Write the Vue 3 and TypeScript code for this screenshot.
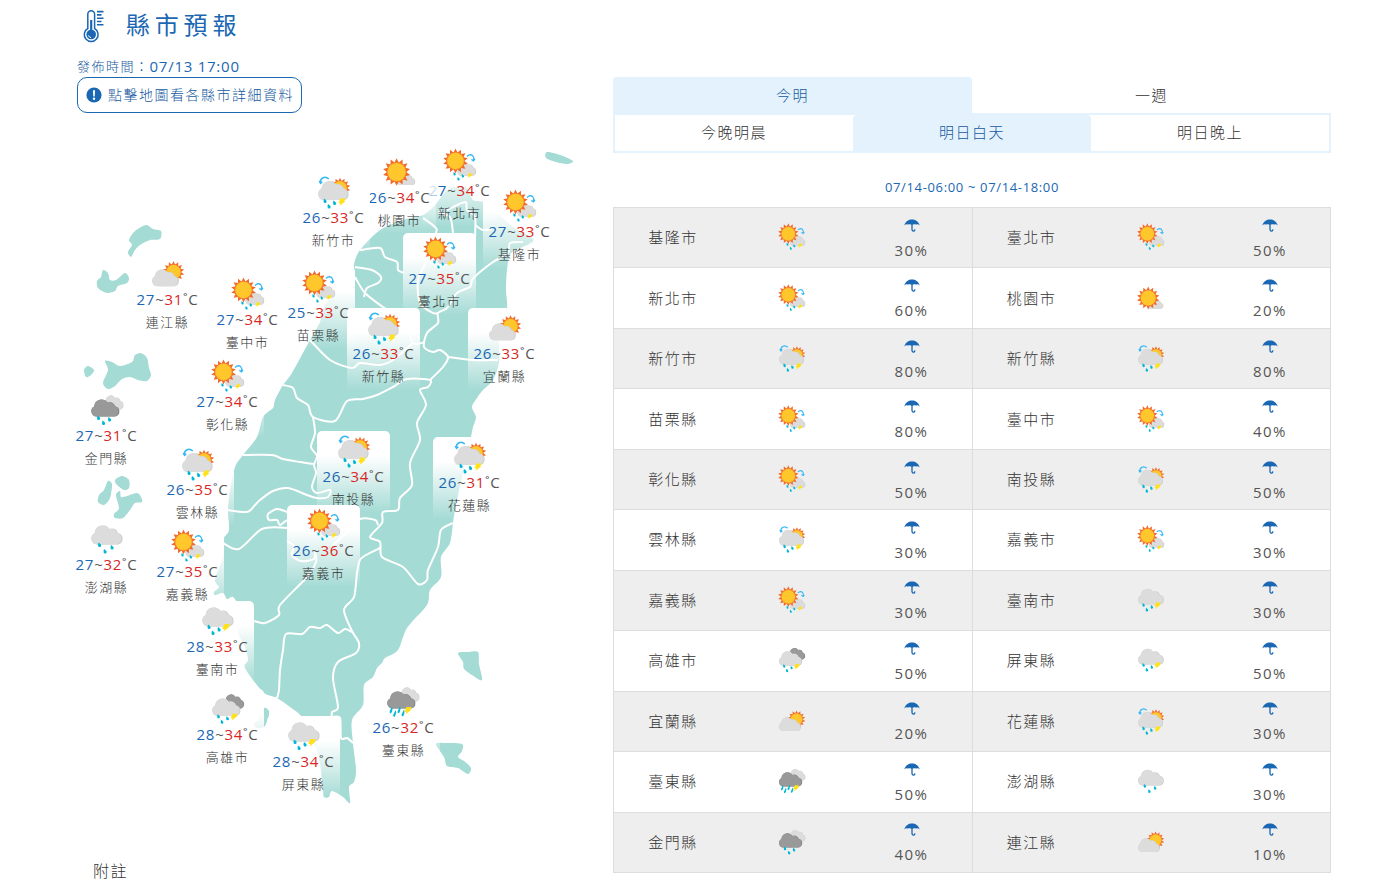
<script setup lang="ts">
import { ref } from 'vue'

type Point = [number, number]
type Kind =
  | 'sun-shower'
  | 'sun-cloud'
  | 'cloud-sun-shower'
  | 'cloud-sun'
  | 'rain'
  | 'thunder'
  | 'overcast-thunder'
  | 'dark-thunder'
  | 'dark-rain'

interface County {
  name: string
  low: number
  high: number
  pop: number
  kind: Kind
  x: number
  y: number
}

const ORIGIN_X = 77
const ORIGIN_Y = 137
const MAP_W = 500
const MAP_H = 690

const counties: County[] = [
  { name: '基隆市', low: 27, high: 33, pop: 30, kind: 'sun-shower', x: 519, y: 186 },
  { name: '臺北市', low: 27, high: 35, pop: 50, kind: 'sun-shower', x: 439, y: 233 },
  { name: '新北市', low: 27, high: 34, pop: 60, kind: 'sun-shower', x: 459, y: 145 },
  { name: '桃園市', low: 26, high: 34, pop: 20, kind: 'sun-cloud', x: 399, y: 152 },
  { name: '新竹市', low: 26, high: 33, pop: 80, kind: 'cloud-sun-shower', x: 333, y: 172 },
  { name: '新竹縣', low: 26, high: 33, pop: 80, kind: 'cloud-sun-shower', x: 383, y: 308 },
  { name: '苗栗縣', low: 25, high: 33, pop: 80, kind: 'sun-shower', x: 318, y: 267 },
  { name: '臺中市', low: 27, high: 34, pop: 40, kind: 'sun-shower', x: 247, y: 274 },
  { name: '彰化縣', low: 27, high: 34, pop: 50, kind: 'sun-shower', x: 227, y: 356 },
  { name: '南投縣', low: 26, high: 34, pop: 50, kind: 'cloud-sun-shower', x: 353, y: 431 },
  { name: '雲林縣', low: 26, high: 35, pop: 30, kind: 'cloud-sun-shower', x: 197, y: 444 },
  { name: '嘉義市', low: 26, high: 36, pop: 30, kind: 'sun-shower', x: 323, y: 505 },
  { name: '嘉義縣', low: 27, high: 35, pop: 30, kind: 'sun-shower', x: 187, y: 526 },
  { name: '臺南市', low: 28, high: 33, pop: 30, kind: 'thunder', x: 217, y: 601 },
  { name: '高雄市', low: 28, high: 34, pop: 50, kind: 'overcast-thunder', x: 227, y: 689 },
  { name: '屏東縣', low: 28, high: 34, pop: 50, kind: 'thunder', x: 303, y: 716 },
  { name: '宜蘭縣', low: 26, high: 33, pop: 20, kind: 'cloud-sun', x: 504, y: 308 },
  { name: '花蓮縣', low: 26, high: 31, pop: 30, kind: 'cloud-sun-shower', x: 469, y: 437 },
  { name: '臺東縣', low: 26, high: 32, pop: 50, kind: 'dark-thunder', x: 403, y: 682 },
  { name: '澎湖縣', low: 27, high: 32, pop: 30, kind: 'rain', x: 106, y: 519 },
  { name: '金門縣', low: 27, high: 31, pop: 40, kind: 'dark-rain', x: 106, y: 390 },
  { name: '連江縣', low: 27, high: 31, pop: 10, kind: 'cloud-sun', x: 167, y: 254 },
]

const rows = Array.from({ length: counties.length / 2 }, (_, i) => counties.slice(i * 2, i * 2 + 2))

const ranges = ['今明', '一週']
const periods = ['今晚明晨', '明日白天', '明日晚上']
const range = ref(0)
const period = ref(1)
const selected = ref('')

function pinStyle(c: County) {
  return {
    left: `${((c.x - ORIGIN_X) / MAP_W) * 100}%`,
    top: `${((c.y - ORIGIN_Y) / MAP_H) * 100}%`,
  }
}

/* "x,y x,y …" to points */
function pts(s: string): Point[] {
  return s.trim().split(/\s+/).map((p) => p.split(',').map(Number) as Point)
}

/* Catmull-Rom spline through the points, written as cubic curves */
function curve(s: string, closed = false): string {
  const p = pts(s)
  const n = p.length
  const at = (i: number): Point => (closed ? p[(i + n) % n] : p[Math.max(0, Math.min(n - 1, i))])
  let d = `M${p[0][0]} ${p[0][1]}`
  const last = closed ? n : n - 1
  for (let i = 0; i < last; i++) {
    const [a, b, c, e] = [at(i - 1), at(i), at(i + 1), at(i + 2)]
    const k = 7
    d += ` C${b[0] + (c[0] - a[0]) / k} ${b[1] + (c[1] - a[1]) / k} ${c[0] - (e[0] - b[0]) / k} ${c[1] - (e[1] - b[1]) / k} ${c[0]} ${c[1]}`
  }
  return closed ? d + 'Z' : d
}

const lands = [
  '447,190 457,187 467,188 473,200 483,202 487,212 497,213 513,227 533,239 527,245 511,253 507,270 506,290 507,308 500,325 499,345 499,363 493,380 483,390 477,398 472,407 476,417 473,427 471,437 466,460 462,477 455,510 453,523 450,543 441,557 441,577 430,590 427,605 407,628 398,650 385,658 382,663 377,668 373,677 364,685 363,705 352,720 353,743 356,770 354,782 349,787 350,803 343,797 332,791 329,797 324,797 323,790 320,763 316,747 308,735 302,717 290,707 277,698 263,692 245,668 248,660 245,647 238,633 236,618 238,606 233,597 227,599 223,593 215,595 214,592 219,587 215,580 222,560 224,547 224,538 229,530 228,510 230,490 235,467 243,455 257,437 263,417 273,408 275,400 283,385 292,373 310,340 320,322 326,303 343,287 354,274 354,264 360,250 380,230 403,220 423,215 435,205',
  '547,152 560,155 573,161 567,164 556,162 546,158',
  '146,225 153,229 161,231 160,239 150,240 140,245 135,250 131,257 128,252 132,245 129,240 135,231',
  '103,270 108,273 110,280 116,280 125,273 129,278 127,283 118,286 115,291 107,293 98,288 97,281 101,277',
  '88,366 94,370 91,375 86,377 84,370',
  '105,361 112,362 120,366 132,362 135,355 141,353 147,358 149,368 151,375 147,381 138,380 130,377 122,379 115,386 108,389 103,383 108,370',
  '108,481 112,484 111,494 109,500 104,505 98,502 99,495 104,490',
  '122,476 129,480 129,488 124,490 117,485 115,480',
  '120,491 121,497 127,496 137,493 141,497 142,502 135,503 130,510 123,518 115,518 114,514 119,508 116,495',
  '264,708 269,711 268,719 264,727 257,728 254,724 259,718',
  '458,653 468,652 478,652 479,664 482,680 472,675 464,669 463,662',
  '436,744 446,743 462,744 462,751 458,757 464,761 471,768 468,774 458,768 447,766 444,757',
].map((s) => curve(s, true))

const borders = [
  '360,250 380,248 385,257 397,262 398,270 404,273',
  '355,267 372,270 381,277 378,283 367,288 364,297',
  '355,277 365,293 383,307 405,322 413,343 425,342',
  '423,218 435,227 436,233 426,262 418,280 420,303 433,313 438,313',
  '438,212 450,217 453,233',
  '447,210 465,202 467,210 475,217 475,237',
  '475,225 483,230 492,229',
  '523,242 510,243 508,253 493,262 480,272 472,280 470,287 457,293 447,308 438,313 438,323 427,333 424,347 433,352 440,350 448,357 443,367 430,380',
  '448,357 473,360 498,360',
  '310,340 330,360 352,368 360,363 380,365 393,360 413,343',
  '283,385 293,388 297,398 308,405 313,417 335,421 347,401 363,399 377,395 393,387 407,379 430,380 428,387 420,390 426,405 417,423 420,440 410,463 412,485 400,498 398,510 383,512 382,523 370,537 380,542 382,557 403,567 418,584 427,580 428,570 438,547 441,530 453,523',
  '313,417 315,433 311,447 317,456 314,465 316,473 312,487 317,493 330,490 328,497 317,498 307,495 288,488 273,491 260,500 255,505 247,512 227,510',
  '243,455 272,455 283,459 300,462 314,464',
  '223,543 239,549 262,529 287,528 298,533',
  '298,518 287,512 277,509 268,514 269,520 277,520 280,525 287,520',
  '333,545 347,532 360,519 375,520 378,525',
  '380,548 368,554 360,560 357,573 354,597 344,610 352,631 359,643 356,653 338,662 333,678 338,707 332,712 332,719',
  '287,541 294,546 292,555 301,561 314,559 315,553 316,562 307,577 280,605 279,615 265,623 254,621',
  '352,632 345,629 338,633 327,625 320,628 310,627 302,634 286,634 283,650 280,670 279,690 277,698',
  '332,717 340,718 341,738 347,738 353,743',
].map((s) => curve(s))

function star(outer: number, inner: number, n = 15): string {
  const out: string[] = []
  for (let i = 0; i < n * 2; i++) {
    const r = i % 2 ? inner : outer
    const a = (Math.PI * i) / n - Math.PI / 2
    out.push(`${(r * Math.cos(a)).toFixed(2)},${(r * Math.sin(a)).toFixed(2)}`)
  }
  return out.join(' ')
}
const sunRays = star(12.6, 8.8, 14)
</script>

<template>
  <svg class="defs" aria-hidden="true">
    <defs>
      <g id="sun">
        <polygon :points="sunRays" fill="#f1692c" />
        <circle r="9" fill="#f58a2c" />
        <circle r="8.2" fill="#ffc72c" />
      </g>
      <path id="cloud-shape" d="M6.5 19.5A6 6 0 0 1 4 8.2A8.3 8.3 0 0 1 19 4A6 6 0 0 1 27.3 8A5.9 5.9 0 0 1 27.5 19.5Z" />
      <g id="cloud">
        <use href="#cloud-shape" fill="#cbcbcb" />
        <path fill="#dcdcdc" d="M6.5 19.5A6 6 0 0 1 4 8.2A8.3 8.3 0 0 1 19 4A6 6 0 0 1 26.5 8Q31 9 31 13.5Q31 18 26.5 19.5Z" />
      </g>
      <g id="cloud-dark">
        <use href="#cloud-shape" fill="#7f7f7f" />
        <path fill="#999" d="M6.5 19.5A6 6 0 0 1 4 8.2A8.3 8.3 0 0 1 19 4A6 6 0 0 1 26.5 8Q31 9 31 13.5Q31 18 26.5 19.5Z" />
      </g>
      <path id="drop" fill="#00b8d4" d="M-1 -2Q2 0 1.6 1.2A1.5 1.5 0 0 1 -1.4 1Q-1.6 0 -1 -2Z" />
      <path id="streak" fill="#00b8d4" d="M1 -3.5L1.6 -1Q1 2.6 -.2 3.4Q-1.8 3.4 -1.4 1.6Z" />
      <path id="bolt" fill="#ffe11a" d="M-1.6 -3.6H3.8L2.4 -1H3.8L-2.6 4.2L-1.4 1.4H-3.8Z" />
      <path id="turn" fill="none" stroke="#35b7f3" stroke-width="1.5" d="M-4 3.6C-4.4 -1.6 .6 -4 4.4 -.4M-5.2 1.6L-3.8 4L-2 2.4" />

      <symbol id="sun-shower" viewBox="0 0 34 34">
        <use href="#cloud" transform="translate(14 14) scale(.6 .7)" />
        <use href="#sun" transform="translate(12.5 13)" />
        <path fill="none" stroke="#35b7f3" stroke-width="1.3" d="M24 8.4Q27 5.6 29.6 7.6Q31.4 9.4 30.6 12.4M28.4 11.4L30.4 12.8L32 11" />
        <use href="#drop" transform="translate(11.5 25.5) scale(.8)" />
        <use href="#drop" transform="translate(15.5 30.5) scale(.8)" />
        <use href="#drop" transform="translate(19.8 27.5) scale(.8)" />
        <use href="#bolt" transform="translate(27 27.5) scale(.65)" />
      </symbol>
      <symbol id="sun-cloud" viewBox="0 0 34 34">
        <use href="#cloud" transform="translate(13 18) scale(.6 .62)" />
        <use href="#sun" transform="translate(13.6 17) scale(1.1)" />
      </symbol>
      <symbol id="cloud-sun-shower" viewBox="0 0 34 34">
        <use href="#sun" transform="translate(23 13) scale(.82)" />
        <use href="#cloud" transform="translate(.6 5.6) scale(.97 1)" />
        <use href="#turn" transform="translate(7.4 4.4)" />
        <use href="#drop" transform="translate(8 25.5)" />
        <use href="#drop" transform="translate(12 31)" />
        <use href="#drop" transform="translate(17.5 27.5)" />
        <use href="#bolt" transform="translate(25 27) scale(.95)" />
      </symbol>
      <symbol id="cloud-sun" viewBox="0 0 34 34">
        <use href="#sun" transform="translate(22.5 15) scale(.86)" />
        <use href="#cloud" transform="translate(.6 12) scale(.85 .88)" />
      </symbol>
      <symbol id="rain" viewBox="0 0 34 34">
        <use href="#cloud" transform="translate(.6 3)" />
        <use href="#drop" transform="translate(9.5 22.5)" />
        <use href="#drop" transform="translate(15 29)" />
        <use href="#drop" transform="translate(22 25)" />
      </symbol>
      <symbol id="thunder" viewBox="0 0 34 34">
        <use href="#cloud" transform="translate(.6 3)" />
        <use href="#drop" transform="translate(8 22.5)" />
        <use href="#drop" transform="translate(12 28.5)" />
        <use href="#drop" transform="translate(18 25)" />
        <use href="#bolt" transform="translate(25 23.5)" />
      </symbol>
      <symbol id="overcast-thunder" viewBox="0 0 34 34">
        <use href="#cloud-dark" transform="translate(12 2) scale(.66 .74)" />
        <use href="#cloud" transform="translate(.6 6) scale(.9 .92)" />
        <use href="#drop" transform="translate(7.5 24) scale(.9)" />
        <use href="#drop" transform="translate(11 29.5) scale(.9)" />
        <use href="#drop" transform="translate(16.5 26) scale(.9)" />
        <use href="#bolt" transform="translate(23 25) scale(.9)" />
      </symbol>
      <symbol id="dark-thunder" viewBox="0 0 34 34">
        <use href="#cloud" transform="translate(13 2) scale(.64 .74)" />
        <use href="#cloud-dark" transform="translate(.6 6) scale(.9)" />
        <use href="#streak" transform="translate(5 25)" />
        <use href="#streak" transform="translate(8.6 28.5)" />
        <use href="#streak" transform="translate(13 24.8)" />
        <use href="#streak" transform="translate(17 28)" />
        <use href="#bolt" transform="translate(22 25.5) scale(.95)" />
      </symbol>
      <symbol id="dark-rain" viewBox="0 0 34 34">
        <use href="#cloud" transform="translate(13 2) scale(.64 .74)" />
        <use href="#cloud-dark" transform="translate(.6 6) scale(.9)" />
        <use href="#drop" transform="translate(8.5 24.5)" />
        <use href="#drop" transform="translate(13.5 29.5)" />
        <use href="#drop" transform="translate(19.5 26)" />
      </symbol>
      <symbol id="umbrella" viewBox="0 0 16 13">
        <path fill="#1a67b3" d="M.3 6.4C1.5 2.4 4.6 .6 8 .6S14.5 2.4 15.7 6.4Q14 4.8 12.2 5.6Q11.4 5 10.2 5.3Q9 5.4 8 5.8Q7 5.4 5.8 5.3Q4.6 5 3.8 5.6Q2 4.8 .3 6.4Z" />
        <path fill="none" stroke="#1a67b3" stroke-width="1.3" d="M8 5V10.6Q8.2 12.2 9.6 12.1Q10.8 12 10.9 10.4" />
      </symbol>
    </defs>
  </svg>

  <main class="page">
    <header class="head">
      <h1 class="title">
        <svg class="thermo" viewBox="0 0 24 34" aria-hidden="true">
          <path fill="none" stroke="#1a67b3" stroke-width="1.5" d="M5.8 19.5V5.2A3.4 3.4 0 0 1 12.6 5.2V19.5A6.9 6.9 0 1 1 5.8 19.5Z" />
          <circle cx="9.2" cy="25.5" r="4.8" fill="#1a67b3" />
          <path fill="none" stroke="#1a67b3" stroke-width="2.2" d="M9.2 11V24" />
          <path fill="none" stroke="#fff" stroke-width="1" d="M6.4 26.4Q7.2 28.4 9 28.6" />
          <path fill="none" stroke="#1a67b3" stroke-width="1.6" d="M15 2.6H21.5M15 5.9H19.5M15 9.2H21.5M15 12.5H19.5M15 15.8H21.5" />
        </svg>
        <span>縣市預報</span>
      </h1>
      <p class="issued"><span>發佈時間：</span><time>07/13 17:00</time></p>
    </header>

    <div class="columns">
      <section class="left">
        <p class="hint">
          <svg class="hint-icon" viewBox="0 0 16 16" aria-hidden="true">
            <circle cx="8" cy="8" r="7.6" fill="#1a67b3" />
            <path fill="#fff" d="M6.9 3.2H9.1L8.7 9.4H7.3Z" />
            <circle cx="8" cy="11.8" r="1.2" fill="#fff" />
          </svg>
          <span>點擊地圖看各縣市詳細資料</span>
        </p>

        <div class="map">
          <svg class="land" :viewBox="`${ORIGIN_X} ${ORIGIN_Y} ${MAP_W} ${MAP_H}`" aria-hidden="true">
            <path v-for="(d, i) in lands" :key="`l${i}`" :d="d" fill="#a5dbd5" />
            <path v-for="(d, i) in borders" :key="`b${i}`" :d="d" class="border" />
          </svg>
          <button
            v-for="c in counties"
            :key="c.name"
            type="button"
            class="pin"
            :style="pinStyle(c)"
            @click="selected = c.name"
          >
            <svg class="pin-icon" aria-hidden="true"><use :href="`#${c.kind}`" /></svg>
            <span class="temp"><span class="low">{{ c.low }}</span>~<span class="high">{{ c.high }}</span>˚C</span>
            <span class="pin-name">{{ c.name }}</span>
          </button>
        </div>

        <h2 class="note">附註</h2>
      </section>

      <section class="right">
        <div class="tabs" role="tablist">
          <button
            v-for="(t, i) in ranges"
            :key="t"
            type="button"
            role="tab"
            class="tab"
            :class="{ active: range === i }"
            :aria-selected="range === i"
            @click="range = i"
          >{{ t }}</button>
        </div>
        <div class="tabs sub" role="tablist">
          <button
            v-for="(t, i) in periods"
            :key="t"
            type="button"
            role="tab"
            class="tab"
            :class="{ active: period === i }"
            :aria-selected="period === i"
            @click="period = i"
          >{{ t }}</button>
        </div>
        <p class="span">07/14-06:00 ~ 07/14-18:00</p>
        <table class="forecast">
          <tbody>
            <tr v-for="(row, i) in rows" :key="i">
              <template v-for="c in row" :key="c.name">
                <th scope="row">{{ c.name }}</th>
                <td><svg class="row-icon" aria-hidden="true"><use :href="`#${c.kind}`" /></svg></td>
                <td class="pop">
                  <svg class="umbrella" aria-hidden="true"><use href="#umbrella" /></svg>
                  <span>{{ c.pop }}%</span>
                </td>
              </template>
            </tr>
          </tbody>
        </table>
      </section>
    </div>
  </main>
</template>

<style>
body {
  margin: 0;
  background: #fff;
}
</style>

<style scoped>
.defs {
  position: absolute;
  width: 0;
  height: 0;
}

.page {
  padding: 0 49px 0 77px;
  font-family: 'Open Sans', 'Noto Sans CJK TC', sans-serif;
  font-size: 15px;
  font-weight: 300;
  line-height: 24px;
  letter-spacing: 0.1em;
  color: #333;
}

h1,
h2,
p {
  margin: 0;
  font-weight: inherit;
}

button {
  padding: 0;
  border: 0;
  background: none;
  color: inherit;
  font: inherit;
  letter-spacing: inherit;
  cursor: pointer;
}

.title {
  display: flex;
  align-items: center;
  gap: 20px;
  height: 52px;
  padding-left: 5px;
  font-size: 24px;
  font-weight: 400;
  line-height: 50px;
  letter-spacing: 0.2em;
  color: #1a67b3;
}

.title span {
  padding-bottom: 2px;
}

.thermo {
  width: 24px;
  height: 34px;
}

.issued {
  display: flex;
  align-items: center;
  height: 22px;
  padding-top: 3px;
  font-size: 13px;
  line-height: 22px;
  color: #1558a0;
}

.issued time {
  font-size: 15px;
  font-weight: 400;
  letter-spacing: 0.05em;
  color: #1a67b3;
}

.columns {
  display: grid;
  grid-template-columns: 500fr 718fr;
  gap: 36px;
}

.hint {
  display: inline-flex;
  align-items: center;
  gap: 6px;
  box-sizing: border-box;
  height: 36px;
  padding: 0 7px 0 8px;
  border: 1px solid #1a67b3;
  border-radius: 10px;
  font-size: 14px;
  color: #1558a0;
}

.hint-icon {
  width: 16px;
  height: 16px;
}

.left {
  display: flex;
  flex-direction: column;
  align-items: flex-start;
}

.map {
  position: relative;
  width: 100%;
  aspect-ratio: 500 / 690;
  margin-top: 24px;
}

.land {
  display: block;
  width: 100%;
  height: 100%;
}

.border {
  fill: none;
  stroke: #fff;
  stroke-width: 2;
  stroke-linejoin: round;
}

.pin {
  position: absolute;
  display: flex;
  flex-direction: column;
  align-items: center;
  width: 73px;
  height: 82px;
  margin-left: -36px;
  padding-top: 3px;
  border-radius: 5px 5px 0 0;
  background: linear-gradient(#fff 30%, rgba(255, 255, 255, 0));
  line-height: 22px;
  white-space: nowrap;
}

.pin-icon {
  flex: none;
  width: 34px;
  height: 34px;
  margin-bottom: -3px;
}

.temp {
  font-weight: 400;
  letter-spacing: 0.05em;
  color: #555;
}

.low {
  color: #1a67b3;
}

.high {
  color: #d8281f;
}

.pin-name {
  padding-top: 1px;
  font-size: 13px;
}

.note {
  margin-top: 32px;
  padding-left: 16px;
  font-size: 16px;
}

.tabs {
  display: flex;
}

.tab {
  flex: 1;
  height: 36px;
  border-radius: 4px 4px 0 0;
}

.tab.active {
  background: #e3f2fd;
  color: #1558a0;
}

.sub {
  border: 2px solid #e3f2fd;
}

.sub .tab {
  padding-bottom: 2px;
}

.span {
  padding: 22px 0 8px;
  font-size: 13px;
  font-weight: 400;
  letter-spacing: 0.05em;
  text-align: center;
  color: #1a67b3;
}

.forecast {
  width: 100%;
  height: 666px;
  border: 1px solid #ddd;
  border-collapse: collapse;
  table-layout: fixed;
}

.forecast tr {
  border-bottom: 1px solid #ddd;
}

.forecast tr:nth-child(odd) {
  background: #eee;
}

.forecast th,
.forecast td {
  padding: 0 1px 1px 0;
  font-weight: inherit;
  text-align: center;
  vertical-align: middle;
}

.forecast td:nth-child(3) {
  border-right: 1px solid #ddd;
}

.row-icon {
  display: block;
  width: 28px;
  height: 28px;
  margin: 0 auto;
}

.umbrella {
  display: block;
  width: 16px;
  height: 13px;
  margin: 6px auto;
}

.pop span {
  display: block;
  font-weight: 400;
  color: #555;
}
</style>
